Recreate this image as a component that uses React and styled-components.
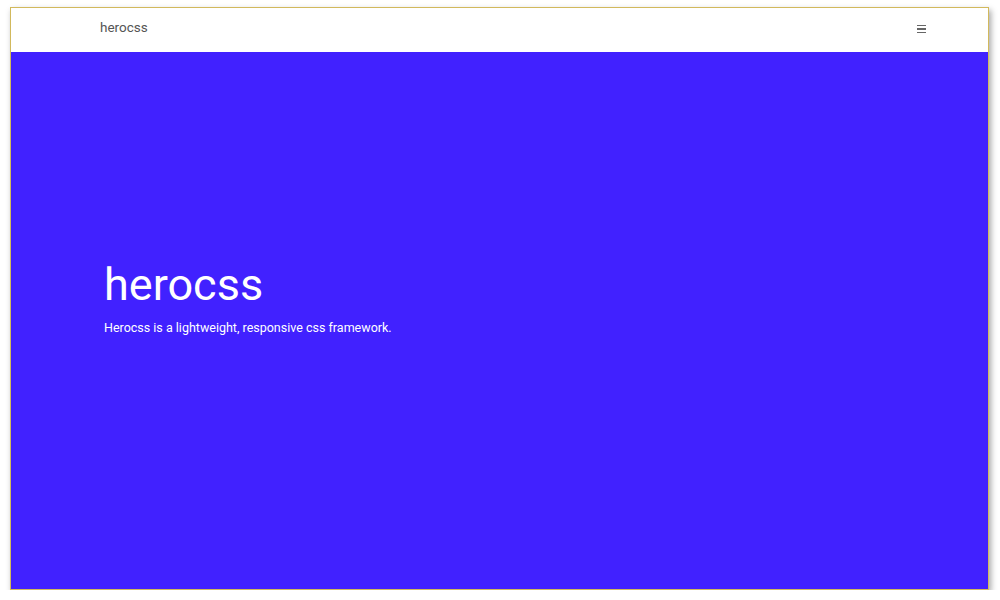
import React from "react";
import styled, { createGlobalStyle } from "styled-components";

const Global = createGlobalStyle`
  html, body {
    margin: 0;
    padding: 0;
    background: #fff;
    font-family: Roboto, "Liberation Sans", sans-serif;
  }
`;

const Frame = styled.div`
  margin: 7px 0 0 10px;
  width: 977px;
  height: 581px;
  border: 1px solid #d2b95c;
  box-shadow: 2px 3px 6px rgba(0, 0, 0, 0.35);
  display: flex;
  flex-direction: column;
  overflow: hidden;
`;

const Navbar = styled.header`
  height: 44px;
  flex: none;
  background: #fff;
  display: flex;
  align-items: center;
  justify-content: space-between;
  padding: 0 62px 0 89px;
`;

const Brand = styled.a`
  font-size: 13.5px;
  color: #555;
  text-decoration: none;
  margin-top: -6px;
`;

const Burger = styled.button`
  border: 0;
  background: none;
  padding: 0;
  width: 9px;
  margin-top: -2px;
  display: flex;
  flex-direction: column;
  gap: 2px;
  cursor: pointer;

  span {
    display: block;
    height: 1.5px;
    background: #666;
  }
`;

const Hero = styled.section`
  flex: 1;
  background: #4121ff;
  color: #fff;
  padding: 206px 93px 0;
`;

const Title = styled.h1`
  margin: 0;
  font-size: 45px;
  font-weight: 400;
  line-height: 54px;
`;

const Lead = styled.p`
  margin: 7px 0 0;
  font-size: 12.5px;
  line-height: 17px;
`;

export default function App() {
  return (
    <>
      <Global />
      <Frame>
        <Navbar>
          <Brand href="#">herocss</Brand>
          <Burger aria-label="menu">
            <span />
            <span />
            <span />
          </Burger>
        </Navbar>
        <Hero>
          <Title>herocss</Title>
          <Lead>Herocss is a lightweight, responsive css framework.</Lead>
        </Hero>
      </Frame>
    </>
  );
}
